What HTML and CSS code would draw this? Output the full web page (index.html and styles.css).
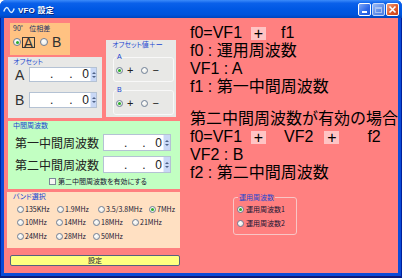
FILE: index.html
```html
<!DOCTYPE html>
<html lang="ja">
<head>
<meta charset="utf-8">
<title>VFO 設定</title>
<link rel="stylesheet" href="styles.css">
</head>
<body>
<div class="window">
  <div class="titlebar">
    <svg class="ticon" width="12" height="8" viewBox="0 0 12 8"><path d="M0.8 5.5 C2.5 0.5 4.5 0.5 6 4 S9.5 7.5 11.2 2.5" fill="none" stroke="#d8ecff" stroke-width="1.4"/></svg>
    <span class="title">VFO 設定</span>
    <div class="tbtns">
      <span class="tb tb-min"><span class="min-bar"></span></span>
      <span class="tb tb-max"><span class="max-box"></span></span>
      <span class="tb tb-close"><svg width="9" height="9" viewBox="0 0 9 9"><path d="M1.5 1.5 L7.5 7.5 M7.5 1.5 L1.5 7.5" stroke="#fff" stroke-width="1.6"/></svg></span>
    </div>
  </div>
  <div class="frame">
    <div class="client">
      <div class="leftcol">
        <div class="top">
          <div class="topleft">
            <div class="grp phase">
              <div class="glabel dark">90゜ 位相差</div>
              <div class="phase-row">
                <span class="radio big on"></span><span class="focus">A</span>
                <span class="radio big rb"></span><span class="plain">B</span>
              </div>
            </div>
            <div class="grp offset">
              <div class="glabel">オフセット</div>
              <div class="off-row r1">
                <span class="letter">A</span>
                <div class="num onum h15"><span class="nv"><span class="d1">.</span><span class="d2">.</span><span class="z">0</span></span><span class="spin"><span class="up"></span><span class="dn"></span></span></div>
              </div>
              <div class="off-row r2">
                <span class="letter">B</span>
                <div class="num onum h16"><span class="nv"><span class="d1">.</span><span class="d2">.</span><span class="z">0</span></span><span class="spin"><span class="up"></span><span class="dn"></span></span></div>
              </div>
            </div>
          </div>
          <div class="grp offval">
            <div class="glabel">オフセット値＋ー</div>
            <div class="sub">
              <div class="sub-label">A</div>
              <div class="pm-row"><span class="radio on"></span><span class="pm">+</span><span class="radio r2m"></span><span class="pm">−</span></div>
            </div>
            <div class="sub">
              <div class="sub-label">B</div>
              <div class="pm-row"><span class="radio on"></span><span class="pm">+</span><span class="radio r2m"></span><span class="pm">−</span></div>
            </div>
          </div>
        </div>
        <div class="grp ifreq">
          <div class="glabel">中間周波数</div>
          <div class="if-row f1">
            <span class="if-text">第一中間周波数</span>
            <div class="num gnum"><span class="nv"><span class="d1">.</span><span class="d2">.</span><span class="z">0</span></span><span class="spin"><span class="up"></span><span class="dn"></span></span></div>
          </div>
          <div class="if-row f2">
            <span class="if-text">第二中間周波数</span>
            <div class="num gnum"><span class="nv"><span class="d1">.</span><span class="d2">.</span><span class="z">0</span></span><span class="spin"><span class="up"></span><span class="dn"></span></span></div>
          </div>
          <div class="chk-row"><span class="chk"></span><span class="small">第二中間周波数を有効にする</span></div>
        </div>
        <div class="grp band">
          <div class="glabel">バンド選択</div>
          <div class="band-row first">
            <span class="bitem w40"><span class="radio"></span><span class="small">135KHz</span></span>
            <span class="bitem w41"><span class="radio"></span><span class="small">1.9MHz</span></span>
            <span class="bitem w51"><span class="radio"></span><span class="small">3.5/3.8MHz</span></span>
            <span class="bitem"><span class="radio on"></span><span class="small">7MHz</span></span>
          </div>
          <div class="band-row">
            <span class="bitem w39"><span class="radio"></span><span class="small">10MHz</span></span>
            <span class="bitem w37"><span class="radio"></span><span class="small">14MHz</span></span>
            <span class="bitem w39"><span class="radio"></span><span class="small">18MHz</span></span>
            <span class="bitem"><span class="radio"></span><span class="small">21MHz</span></span>
          </div>
          <div class="band-row last">
            <span class="bitem w39"><span class="radio"></span><span class="small">24MHz</span></span>
            <span class="bitem w37"><span class="radio"></span><span class="small">28MHz</span></span>
            <span class="bitem"><span class="radio"></span><span class="small">50MHz</span></span>
          </div>
        </div>
        <div class="setbtn">設定</div>
      </div>
      <div class="rightcol">
        <div class="line"><span>f0=VF1</span><span class="plus">+</span><span class="after1">f1</span></div>
        <div class="line">f0 : 運用周波数</div>
        <div class="line">VF1 : A</div>
        <div class="line">f1 : 第一中間周波数</div>
        <div class="line blk2">第二中間周波数が有効の場合</div>
        <div class="line"><span>f0=VF1</span><span class="plus">+</span><span class="vf2">VF2</span><span class="plus p2">+</span><span class="after2">f2</span></div>
        <div class="line">VF2 : B</div>
        <div class="line">f2 : 第二中間周波数</div>
        <div class="opgrp">
          <div class="op-label">運用周波数</div>
          <div class="op-row"><span class="radio on"></span><span class="small">運用周波数1</span></div>
          <div class="op-row"><span class="radio"></span><span class="small">運用周波数2</span></div>
        </div>
      </div>
    </div>
  </div>
</div>
</body>
</html>
```
FILE: styles.css
```css
* { box-sizing: border-box; }
html, body { margin: 0; padding: 0; }
body {
  width: 402px;
  height: 278px;
  overflow: hidden;
  background: #fff;
  font-family: "Liberation Sans", "Noto Sans CJK JP", sans-serif;
}
.window {
  width: 402px;
  height: 278px;
  display: flex;
  flex-direction: column;
  background: #0B4BD8;
  border-radius: 6px 6px 0 0;
  overflow: hidden;
}
.titlebar {
  height: 18px;
  flex: none;
  display: flex;
  align-items: center;
  padding-left: 3px;
  background: linear-gradient(#3C8BFA 0%, #0A60EA 18%, #0058E4 50%, #0053DB 82%, #0044BC 100%);
  color: #fff;
}
.ticon { flex: none; margin-top: 1px; }
.title {
  margin-left: 3px;
  font-weight: bold;
  font-size: 8px;
  font-family: "Liberation Sans", "Noto Sans CJK JP", sans-serif;
  text-shadow: 1px 1px 0 #0A2A80;
  letter-spacing: 0.2px;
}
.tbtns { margin-left: auto; margin-right: 3px; display: flex; gap: 1px; margin-top: 1px; }
.tb {
  width: 13px;
  height: 13px;
  border: 1px solid #fff;
  border-radius: 2px;
  display: flex;
  align-items: center;
  justify-content: center;
  position: relative;
}
.tb-min { background: linear-gradient(135deg, #7FA8F8, #2A66E8 60%, #1F55D8); }
.min-bar { position: absolute; left: 3px; bottom: 2px; width: 5px; height: 2px; background: #fff; }
.tb-max { background: linear-gradient(135deg, #9ABBF5, #5D8CEA 60%, #4E7EE0); border-color: #C8D8F8; }
.max-box { width: 7px; height: 6px; border: 1px solid #A9C2F2; border-top-width: 2px; }
.tb-close { background: linear-gradient(135deg, #F0A080, #E05A2A 55%, #C8401A); }

.frame {
  flex: 1;
  padding: 0 4px 5px 4px;
  background: #0B4BD8;
  box-shadow: inset 1px 0 #00209A, inset -1px 0 #00209A, inset 0 -2px #101C78;
}
.client {
  height: 100%;
  background: #FF8080;
  display: flex;
  padding-left: 3px;
}
.leftcol { width: 173px; flex: none; display: flex; flex-direction: column; }
.top { display: flex; height: 100px; flex: none; }
.topleft { width: 96px; padding-left: 1px; flex: none; }

.grp { flex: none; }
.glabel {
  font-family: "Noto Sans CJK JP", sans-serif;
  font-feature-settings: "palt";
  font-size: 7px;
  line-height: 9px;
  color: #1846D0;
  padding-left: 5px;
  white-space: nowrap;
}
.glabel.dark { color: #203064; padding-left: 3px; padding-top: 1px; }
.small {
  font-family: "Noto Sans CJK JP", sans-serif;
  font-feature-settings: "palt";
  font-size: 7px;
  line-height: 9px;
  color: #141432;
  white-space: nowrap;
}

.radio {
  width: 7px;
  height: 7px;
  border-radius: 50%;
  border: 1px solid #6F8098;
  background: radial-gradient(circle at 40% 35%, #ffffff, #e2e2da);
  flex: none;
  position: relative;
}
.radio.on::after {
  content: "";
  position: absolute;
  left: 1px;
  top: 1px;
  width: 3px;
  height: 3px;
  border-radius: 50%;
  background: #2CAE2C;
}
.radio.big { width: 8px; height: 8px; }
.radio.big.on::after { left: 1.5px; top: 1.5px; }

/* phase group */
.phase { margin: 5px 0 0 2px; width: 60px; height: 32px; background: #FFC282; }
.phase-row { display: flex; align-items: center; height: 16px; margin-top: 1px; padding-left: 3px; }
.focus {
  margin-left: 1px;
  border: 1px solid #3A3A3A;
  width: 13px;
  height: 11px;
  font-size: 14px;
  line-height: 11px;
  text-align: center;
  color: #303030;
}
.rb { margin-left: 5px; }
.plain { margin-left: 4px; font-size: 14px; line-height: 11px; color: #303030; }

/* offset */
.offset { margin-top: 2px; width: 94px; height: 61px; background: #E8E8E6; }
.off-row { display: flex; align-items: center; padding-left: 7px; }
.off-row.r1 { margin-top: 1px; }
.off-row.r2 { margin-top: 10px; }
.letter { width: 14px; font-size: 14px; line-height: 14px; color: #303030; }
.num {
  display: flex;
  background: #fff;
  border: 1px solid #B4C2D4;
  flex: none;
}
.onum { width: 68px; }
.h15 { height: 15px; }
.h16 { height: 16px; }
.nv { flex: 1; display: flex; align-items: flex-end; font-size: 12px; line-height: 12px; color: #202020; padding-bottom: 1px; }
.d1 { margin-left: 20px; }
.d2 { margin-left: 16px; }
.z { margin-left: auto; margin-right: 1px; }
.spin { width: 6px; display: flex; flex-direction: column; background: #C9D8F6; border-left: 1px solid #E4ECFB; }
.spin .up, .spin .dn { flex: 1; position: relative; }
.spin .up::after, .spin .dn::after {
  content: "";
  position: absolute;
  left: 1px;
  border-left: 2px solid transparent;
  border-right: 2px solid transparent;
}
.spin .up::after { bottom: 1px; border-bottom: 2px solid #4E6288; }
.spin .dn::after { top: 1px; border-top: 2px solid #4E6288; }

/* offset value */
.offval { margin: 22px 0 0 3px; width: 70px; height: 77px; background: #E8E8E6; padding-left: 7px; padding-right: 2px; }
.offval .glabel { padding-left: 0; margin-left: -1px; }
.sub {
  margin-top: 8px;
  height: 25px;
  border: 1px solid #F8F8F8;
  border-radius: 3px;
  padding-left: 2px;
}
.sub-label {
  margin-top: -6px;
  font-size: 7px;
  line-height: 9px;
  color: #1846D0;
  padding-left: 1px;
  width: 6px;
  background: #E8E8E6;
}
.pm-row { display: flex; align-items: center; height: 12px; margin-top: 3px; }
.pm { font-size: 11px; line-height: 11px; color: #202020; margin-left: 4px; }
.r2m { margin-left: 8px; }

/* intermediate freq */
.ifreq { margin: 3px 0 0 1px; width: 172px; height: 68px; background: #C2FFC2; }
.if-row { display: flex; align-items: center; padding-left: 7px; height: 17px; }
.if-row.f1 { margin-top: 4px; }
.if-row.f2 { margin-top: 5px; }
.if-text {
  width: 88px;
  font-family: "Noto Sans CJK JP", sans-serif;
  font-size: 12px;
  line-height: 14px;
  color: #202020;
  white-space: nowrap;
}
.gnum { width: 68px; height: 17px; }
.gnum .d2 { margin-left: 15px; }
.gnum .spin { width: 7px; }
.chk-row { display: flex; align-items: center; margin-top: 4px; padding-left: 41px; height: 9px; gap: 2px; }
.chk { width: 7px; height: 7px; border: 1px solid #7A8898; background: #F6F6F2; flex: none; }

/* band */
.band { margin-top: 3px; width: 173px; height: 56px; background: #FFE0C2; }
.band .glabel { padding-left: 6px; }
.band-row { display: flex; align-items: center; height: 13px; padding-left: 10px; }
.band-row.first { margin-top: 2px; }
.band-row.last { margin-top: 1px; }
.bitem { display: flex; align-items: center; gap: 1px; flex: none; }
.w37 { width: 37px; }
.w39 { width: 39px; }
.w40 { width: 40px; }
.w41 { width: 41px; }
.w51 { width: 51px; }

.setbtn {
  margin: 7px 0 0 3px;
  width: 170px;
  height: 11px;
  background: #FFFF80;
  border: 1px solid #56627E;
  border-radius: 2px;
  text-align: center;
  font-family: "Noto Sans CJK JP", sans-serif;
  font-size: 7px;
  line-height: 9px;
  color: #141432;
  flex: none;
}

/* right column */
.rightcol {
  margin-left: 10px;
  padding-top: 6px;
  font-size: 16px;
  line-height: 18px;
  color: #000;
  flex: 1;
}
.line { height: 18px; display: flex; align-items: center; white-space: pre; }
.blk2 { margin-top: 14px; }
.plus {
  background: #FFC4C4;
  width: 15px;
  height: 13px;
  line-height: 13px;
  text-align: center;
  margin-left: 9px;
}
.after1 { margin-left: 15px; }
.vf2 { margin-left: 18px; }
.p2 { margin-left: 11px; }
.after2 { margin-left: 28px; }

.opgrp {
  margin: 15px 0 0 43px;
  width: 64px;
  height: 38px;
  border: 1px solid #F8C6C6;
  border-radius: 3px;
  padding-left: 3px;
  line-height: 9px;
}
.op-label {
  width: max-content;
  margin-top: -5px;
  margin-left: 1px;
  font-family: "Noto Sans CJK JP", sans-serif;
  font-feature-settings: "palt";
  font-size: 7px;
  line-height: 9px;
  color: #1846D0;
  background: #FF8080;
  padding: 0 1px;
}
.op-row { display: flex; align-items: center; height: 14px; gap: 2px; }
```
